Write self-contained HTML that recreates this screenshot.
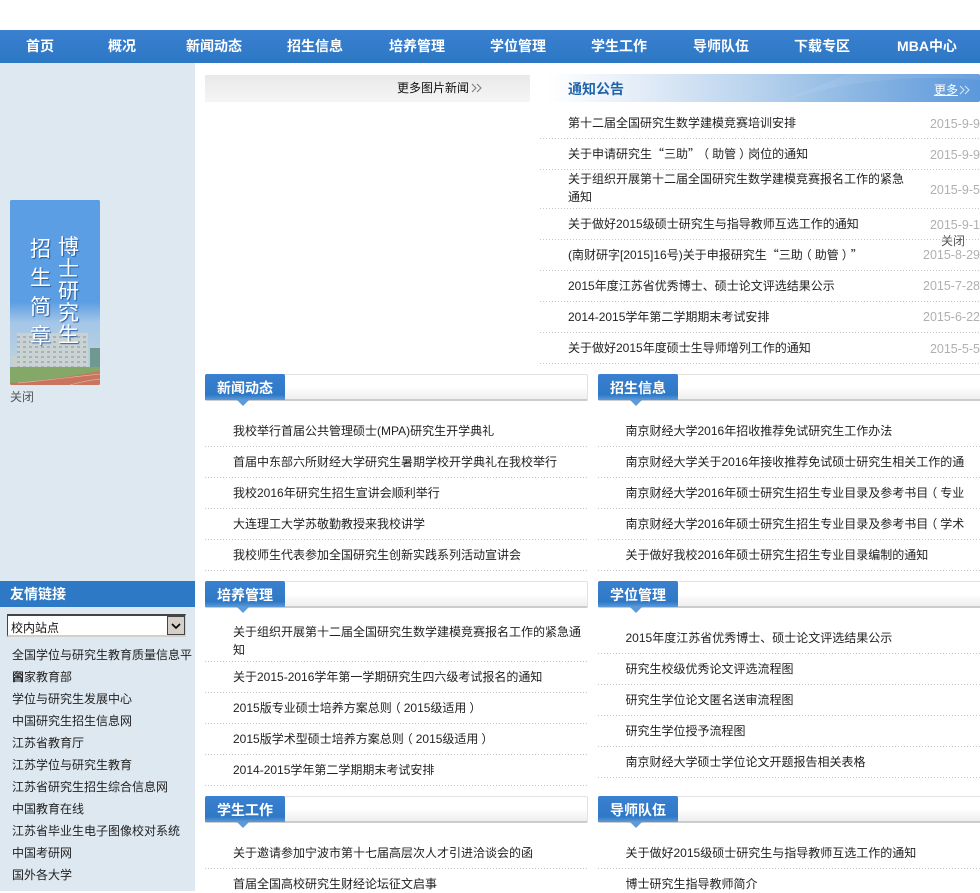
<!DOCTYPE html>
<html lang="zh"><head><meta charset="utf-8"><title>研究生院</title>
<style>
html,body{margin:0;padding:0;background:#fff}
body{position:relative;width:980px;height:891px;overflow:hidden;font:12px/18px "Liberation Sans","WenQuanYi Zen Hei","Noto Sans CJK SC",sans-serif;color:#222;text-spacing-trim:space-all}
div,span{position:absolute;white-space:nowrap}
b{font-weight:normal;font-family:"WenQuanYi Zen Hei","Noto Sans CJK SC",sans-serif}
i{font-style:normal;position:relative;left:-3px}
u{text-decoration:none;position:relative;left:3px}
.nav{left:0;top:30px;width:980px;height:33px;background:linear-gradient(#3a80d0,#2c78c4)}
.nav span{top:0;line-height:32px;font-size:14px;font-weight:bold;color:#fff;transform:translateX(-50%)}
.side{left:0;top:63px;width:195px;height:828px;background:#dee8f1}
.line{height:1px;background:repeating-linear-gradient(90deg,#c4c4c4 0,#c4c4c4 1px,transparent 1px,transparent 3px)}
.d{color:#b0b0b0;text-align:right;right:0;font-size:12.5px}
.hd{height:24px;border:1px solid #e2e2e2;border-bottom:2px solid #ccc;border-radius:2px;background:linear-gradient(#fff 50%,#eee)}
.tab{width:80px;height:26px;background:linear-gradient(#3a80d0 0,#2e79c6 80%,#5f9ad8 100%);color:#fff;font-weight:bold;font-size:14px;line-height:28px;text-align:center;border-radius:2px 2px 0 0}
.arr{width:0;height:0;border-left:6px solid transparent;border-right:6px solid transparent;border-top:6px solid #5f9ad8}
.sl{left:12px;color:#222}
svg{display:block}
</style></head><body>
<div class="nav">
<span style="left:40px">首页</span><span style="left:122px">概况</span><span style="left:214px">新闻动态</span><span style="left:315px">招生信息</span><span style="left:417px">培养管理</span><span style="left:518px">学位管理</span><span style="left:619px">学生工作</span><span style="left:721px">导师队伍</span><span style="left:822px">下载专区</span><span style="left:927px">MBA中心</span>
</div>
<div class="side"></div>

<div style="left:10px;top:200px;width:90px;height:185px;border-radius:2px;overflow:hidden;background:#5b9ee3">
<svg width="90" height="185" style="position:absolute;left:0;top:0">
<defs>
<linearGradient id="sky" x1="0" y1="0" x2="0" y2="1"><stop offset="0" stop-color="#5b9ee3"/><stop offset=".6" stop-color="#5b9ee3"/><stop offset=".72" stop-color="#a4c6e8"/><stop offset=".9" stop-color="#b7cfe0"/></linearGradient>
<pattern id="win" width="6" height="5" patternUnits="userSpaceOnUse"><rect width="6" height="5" fill="#ccd2d0"/><rect x="1" y="1" width="3" height="2" fill="#a3b1b5"/></pattern>
</defs>
<rect width="90" height="170" fill="url(#sky)"/>
<rect x="1" y="156" width="10" height="11" fill="#c8d0d0"/>
<rect x="80" y="148" width="10" height="20" fill="#6f9890"/>
<rect x="7" y="133" width="71" height="34" fill="url(#win)" opacity=".9"/>
<rect x="0" y="167" width="90" height="18" fill="#83a868"/>
<path d="M0 185L0 183C30 181 65 176 90 171L90 185Z" fill="#c9745e"/>
<path d="M8 183C40 180 70 176 90 174M60 185C70 182 82 180 90 179" stroke="#e2b0a0" fill="none" stroke-width=".7"/>
</svg>
<div style="left:20px;top:35px;width:22px;font-size:21px;line-height:29px;color:#fff;white-space:normal;text-shadow:1px 1px 1px #2a5da0">招生简章</div>
<div style="left:48px;top:37px;width:22px;font-size:21px;line-height:22px;color:#fff;white-space:normal;text-shadow:1px 1px 1px #2a5da0">博士研究生</div>
</div>
<div style="left:10px;top:388px;color:#555">关闭</div>

<div style="left:0;top:581px;width:195px;height:26px;background:#2e79c6;color:#fff;font-weight:bold;font-size:14px;line-height:26px;text-indent:10px">友情链接</div>
<div style="left:7px;top:614px;width:179px;height:23px;background:#fff;border-top:2px solid #444;border-left:1px solid #444;border-bottom:2px solid #d4d0c8;box-sizing:border-box;border-right:1px solid #d4d0c8;color:#111;line-height:25px;font-size:12px;text-indent:3px">校内站点
<div style="right:0;top:0;width:18px;height:19px;background:#d4d0c8;border:1px solid #444;box-sizing:border-box"><svg width="16" height="17" style="position:absolute;left:0;top:0"><path d="M4 7l4 4 4-4" fill="none" stroke="#000" stroke-width="1.6"/></svg></div></div>
<div class="sl" style="top:646px">全国学位与研究生教育质量信息平</div>
<div class="sl" style="top:668px">台</div>
<div class="sl" style="top:668px">国家教育部</div>
<div class="sl" style="top:690px">学位与研究生发展中心</div>
<div class="sl" style="top:712px">中国研究生招生信息网</div>
<div class="sl" style="top:734px">江苏省教育厅</div>
<div class="sl" style="top:756px">江苏学位与研究生教育</div>
<div class="sl" style="top:778px">江苏省研究生招生综合信息网</div>
<div class="sl" style="top:800px">中国教育在线</div>
<div class="sl" style="top:822px">江苏省毕业生电子图像校对系统</div>
<div class="sl" style="top:844px">中国考研网</div>
<div class="sl" style="top:866px">国外各大学</div>

<div style="left:205px;top:75px;width:325px;height:27px;background:linear-gradient(#e9e9e9,#f5f5f5)"></div>
<div style="left:397px;top:79px;color:#111">更多图片新闻</div>
<svg width="12" height="10" style="position:absolute;left:471px;top:83px"><path d="M1 1l4 4-4 4M6 1l4 4-4 4" fill="none" stroke="#777" stroke-width="1"/></svg>

<div style="left:548px;top:74px;width:432px;height:28px;overflow:hidden;background:linear-gradient(90deg,#fff 0,#e2ecf7 22%,#b8d2ed 48%,#8ab6e3 72%,#5c98dc 100%);border-radius:0 2px 2px 0">
<svg width="432" height="28" style="position:absolute;left:0;top:0"><path d="M230 28C290 8 360 0 432 6L432 0 300 0Z" fill="#fff" opacity=".08"/></svg></div>
<div style="left:568px;top:80px;color:#1f63ab;font-weight:bold;font-size:14px">通知公告</div>
<div style="left:934px;top:81px;color:#fff;text-decoration:underline">更多</div>
<svg width="12" height="10" style="position:absolute;left:959px;top:85px"><path d="M1 1l4 4-4 4M6 1l4 4-4 4" fill="none" stroke="#dbe8f6" stroke-width="1"/></svg>

<div style="left:568px;top:114px">第十二届全国研究生数学建模竞赛培训安排</div><div class="d" style="top:115px">2015-9-9</div><div class="line" style="left:540px;top:138px;width:440px"></div>
<div style="left:568px;top:145px">关于申请研究生<b>“</b>三助<b>”</b><i>（</i>助管<u>）</u>岗位的通知</div><div class="d" style="top:146px">2015-9-9</div><div class="line" style="left:540px;top:169px;width:440px"></div>
<div style="left:568px;top:170px">关于组织开展第十二届全国研究生数学建模竞赛报名工作的紧急</div><div style="left:568px;top:188px">通知</div><div class="d" style="top:181px">2015-9-5</div><div class="line" style="left:540px;top:208px;width:440px"></div>
<div style="left:568px;top:215px">关于做好2015级硕士研究生与指导教师互选工作的通知</div><div class="d" style="top:216px">2015-9-1</div><div class="line" style="left:540px;top:239px;width:440px"></div>
<div style="left:941px;top:232px;color:#555">关闭</div>
<div style="left:568px;top:246px">(南财研字[2015]16号)关于申报研究生<b>“</b>三助<i>（</i>助管<u>）</u><b>”</b></div><div class="d" style="top:246px">2015-8-29</div><div class="line" style="left:540px;top:270px;width:440px"></div>
<div style="left:568px;top:277px">2015年度江苏省优秀博士、硕士论文评选结果公示</div><div class="d" style="top:277px">2015-7-28</div><div class="line" style="left:540px;top:301px;width:440px"></div>
<div style="left:568px;top:308px">2014-2015学年第二学期期末考试安排</div><div class="d" style="top:308px">2015-6-22</div><div class="line" style="left:540px;top:332px;width:440px"></div>
<div style="left:568px;top:339px">关于做好2015年度硕士生导师增列工作的通知</div><div class="d" style="top:340px">2015-5-5</div><div class="line" style="left:540px;top:363px;width:440px"></div>

<!-- 新闻动态 -->
<div class="hd" style="left:205px;top:374px;width:381px"></div><div class="tab" style="left:205px;top:374px">新闻动态</div><div class="arr" style="left:237px;top:400px"></div>
<div class="hd" style="left:598px;top:374px;width:382px"></div><div class="tab" style="left:598px;top:374px">招生信息</div><div class="arr" style="left:630px;top:400px"></div>

<div style="left:233px;top:422px">我校举行首届公共管理硕士(MPA)研究生开学典礼</div><div class="line" style="left:205px;top:446px;width:383px"></div>
<div style="left:233px;top:453px">首届中东部六所财经大学研究生暑期学校开学典礼在我校举行</div><div class="line" style="left:205px;top:477px;width:383px"></div>
<div style="left:233px;top:484px">我校2016年研究生招生宣讲会顺利举行</div><div class="line" style="left:205px;top:508px;width:383px"></div>
<div style="left:233px;top:515px">大连理工大学苏敬勤教授来我校讲学</div><div class="line" style="left:205px;top:539px;width:383px"></div>
<div style="left:233px;top:546px">我校师生代表参加全国研究生创新实践系列活动宣讲会</div><div class="line" style="left:205px;top:570px;width:383px"></div>

<div style="left:625.5px;top:422px">南京财经大学2016年招收推荐免试研究生工作办法</div><div class="line" style="left:598px;top:446px;width:382px"></div>
<div style="left:625.5px;top:453px">南京财经大学关于2016年接收推荐免试硕士研究生相关工作的通</div><div class="line" style="left:598px;top:477px;width:382px"></div>
<div style="left:625.5px;top:484px">南京财经大学2016年硕士研究生招生专业目录及参考书目<i>（</i>专业</div><div class="line" style="left:598px;top:508px;width:382px"></div>
<div style="left:625.5px;top:515px">南京财经大学2016年硕士研究生招生专业目录及参考书目<i>（</i>学术</div><div class="line" style="left:598px;top:539px;width:382px"></div>
<div style="left:625.5px;top:546px">关于做好我校2016年硕士研究生招生专业目录编制的通知</div><div class="line" style="left:598px;top:570px;width:382px"></div>

<!-- 培养管理 -->
<div class="hd" style="left:205px;top:581px;width:381px"></div><div class="tab" style="left:205px;top:581px">培养管理</div><div class="arr" style="left:237px;top:607px"></div>
<div class="hd" style="left:598px;top:581px;width:382px"></div><div class="tab" style="left:598px;top:581px">学位管理</div><div class="arr" style="left:630px;top:607px"></div>

<div style="left:233px;top:623px">关于组织开展第十二届全国研究生数学建模竞赛报名工作的紧急通</div><div style="left:233px;top:641px">知</div><div class="line" style="left:205px;top:661px;width:383px"></div>
<div style="left:233px;top:668px">关于2015-2016学年第一学期研究生四六级考试报名的通知</div><div class="line" style="left:205px;top:692px;width:383px"></div>
<div style="left:233px;top:699px">2015版专业硕士培养方案总则<i>（</i>2015级适用<u>）</u></div><div class="line" style="left:205px;top:723px;width:383px"></div>
<div style="left:233px;top:730px">2015版学术型硕士培养方案总则<i>（</i>2015级适用<u>）</u></div><div class="line" style="left:205px;top:754px;width:383px"></div>
<div style="left:233px;top:761px">2014-2015学年第二学期期末考试安排</div><div class="line" style="left:205px;top:785px;width:383px"></div>

<div style="left:625.5px;top:629px">2015年度江苏省优秀博士、硕士论文评选结果公示</div><div class="line" style="left:598px;top:653px;width:382px"></div>
<div style="left:625.5px;top:660px">研究生校级优秀论文评选流程图</div><div class="line" style="left:598px;top:684px;width:382px"></div>
<div style="left:625.5px;top:691px">研究生学位论文匿名送审流程图</div><div class="line" style="left:598px;top:715px;width:382px"></div>
<div style="left:625.5px;top:722px">研究生学位授予流程图</div><div class="line" style="left:598px;top:746px;width:382px"></div>
<div style="left:625.5px;top:753px">南京财经大学硕士学位论文开题报告相关表格</div><div class="line" style="left:598px;top:777px;width:382px"></div>

<!-- 学生工作 -->
<div class="hd" style="left:205px;top:796px;width:381px"></div><div class="tab" style="left:205px;top:796px">学生工作</div><div class="arr" style="left:237px;top:822px"></div>
<div class="hd" style="left:598px;top:796px;width:382px"></div><div class="tab" style="left:598px;top:796px">导师队伍</div><div class="arr" style="left:630px;top:822px"></div>

<div style="left:233px;top:844px">关于邀请参加宁波市第十七届高层次人才引进洽谈会的函</div><div class="line" style="left:205px;top:868px;width:383px"></div>
<div style="left:233px;top:875px">首届全国高校研究生财经论坛征文启事</div>
<div style="left:625.5px;top:844px">关于做好2015级硕士研究生与指导教师互选工作的通知</div><div class="line" style="left:598px;top:868px;width:382px"></div>
<div style="left:625.5px;top:875px">博士研究生指导教师简介</div>
</body></html>
